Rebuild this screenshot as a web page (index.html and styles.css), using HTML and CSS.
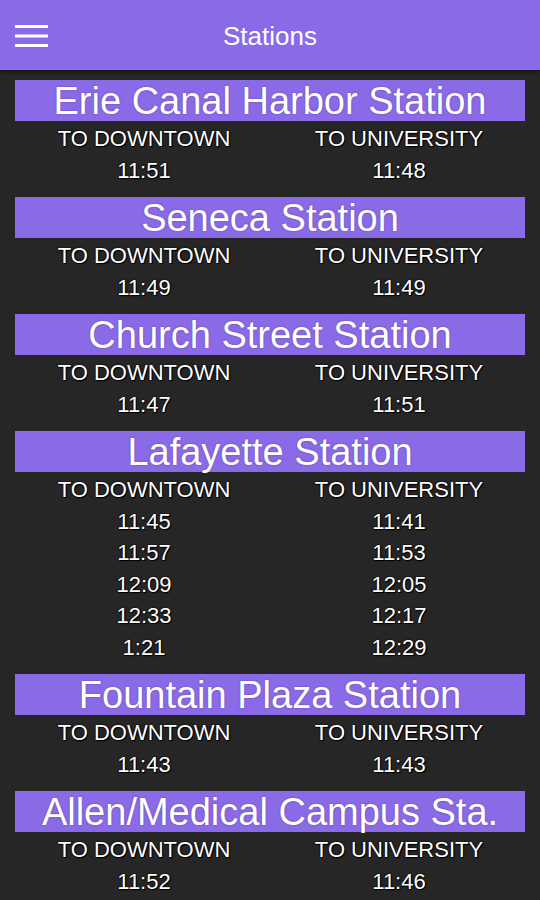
FILE: index.html
```html
<!DOCTYPE html>
<html>
<head>
<meta charset="utf-8">
<link rel="stylesheet" href="styles.css">
</head>
<body>
<header class="topbar">
  <svg class="menu" width="34" height="24" viewBox="0 0 34 24">
    <rect x="0" y="1" width="33" height="3" fill="#fff"/>
    <rect x="0" y="10.5" width="33" height="3" fill="#fff"/>
    <rect x="0" y="20" width="33" height="3" fill="#fff"/>
  </svg>
  <div class="title">Stations</div>
</header>
<main class="list">
  <section class="station">
    <h2 class="name">Erie Canal Harbor Station</h2>
    <div class="cols">
      <div class="col"><div class="lbl">TO DOWNTOWN</div><div class="t">11:51</div></div>
      <div class="col"><div class="lbl">TO UNIVERSITY</div><div class="t">11:48</div></div>
    </div>
  </section>
  <section class="station">
    <h2 class="name">Seneca Station</h2>
    <div class="cols">
      <div class="col"><div class="lbl">TO DOWNTOWN</div><div class="t">11:49</div></div>
      <div class="col"><div class="lbl">TO UNIVERSITY</div><div class="t">11:49</div></div>
    </div>
  </section>
  <section class="station">
    <h2 class="name">Church Street Station</h2>
    <div class="cols">
      <div class="col"><div class="lbl">TO DOWNTOWN</div><div class="t">11:47</div></div>
      <div class="col"><div class="lbl">TO UNIVERSITY</div><div class="t">11:51</div></div>
    </div>
  </section>
  <section class="station">
    <h2 class="name">Lafayette Station</h2>
    <div class="cols">
      <div class="col"><div class="lbl">TO DOWNTOWN</div><div class="t">11:45</div><div class="t">11:57</div><div class="t">12:09</div><div class="t">12:33</div><div class="t">1:21</div></div>
      <div class="col"><div class="lbl">TO UNIVERSITY</div><div class="t">11:41</div><div class="t">11:53</div><div class="t">12:05</div><div class="t">12:17</div><div class="t">12:29</div></div>
    </div>
  </section>
  <section class="station">
    <h2 class="name">Fountain Plaza Station</h2>
    <div class="cols">
      <div class="col"><div class="lbl">TO DOWNTOWN</div><div class="t">11:43</div></div>
      <div class="col"><div class="lbl">TO UNIVERSITY</div><div class="t">11:43</div></div>
    </div>
  </section>
  <section class="station">
    <h2 class="name">Allen/Medical Campus Sta.</h2>
    <div class="cols">
      <div class="col"><div class="lbl">TO DOWNTOWN</div><div class="t">11:52</div></div>
      <div class="col"><div class="lbl">TO UNIVERSITY</div><div class="t">11:46</div></div>
    </div>
  </section>
</main>
</body>
</html>
```

FILE: styles.css
```css
html, body {
  margin: 0;
  padding: 0;
}
body {
  width: 540px;
  height: 900px;
  overflow: hidden;
  background: #262626;
  font-family: "Liberation Sans", Arial, sans-serif;
  color: #fff;
}
.topbar {
  height: 70px;
  background: #8a6ae6;
  position: relative;
  display: flex;
  align-items: center;
  justify-content: center;
  box-shadow: 0 2px 4px rgba(0,0,0,0.5);
}
.menu {
  position: absolute;
  left: 15px;
  top: 24px;
}
.title {
  font-size: 26px;
  line-height: 1;
  margin-top: 1px;
}
.list {
  padding: 10px 15px 0;
}
.station {
  padding-bottom: 11px;
}
.name {
  margin: 0 0 2px;
  height: 41px;
  background: #8a6ae6;
  font-weight: normal;
  font-size: 38px;
  line-height: 42px;
  text-align: center;
  white-space: nowrap;
  text-shadow: 0 0 2px rgba(0,0,0,0.3);
}
.cols {
  display: grid;
  grid-template-columns: 1fr 1fr;
}
.col {
  text-align: center;
  font-size: 22px;
  line-height: 31.5px;
  text-shadow: 0 0 2px #000, 0 0 1px #000, 1px 1px 1px #000;
}
.col:first-child {
  padding-left: 3px;
}
.col:last-child {
  padding-left: 3px;
}
```
